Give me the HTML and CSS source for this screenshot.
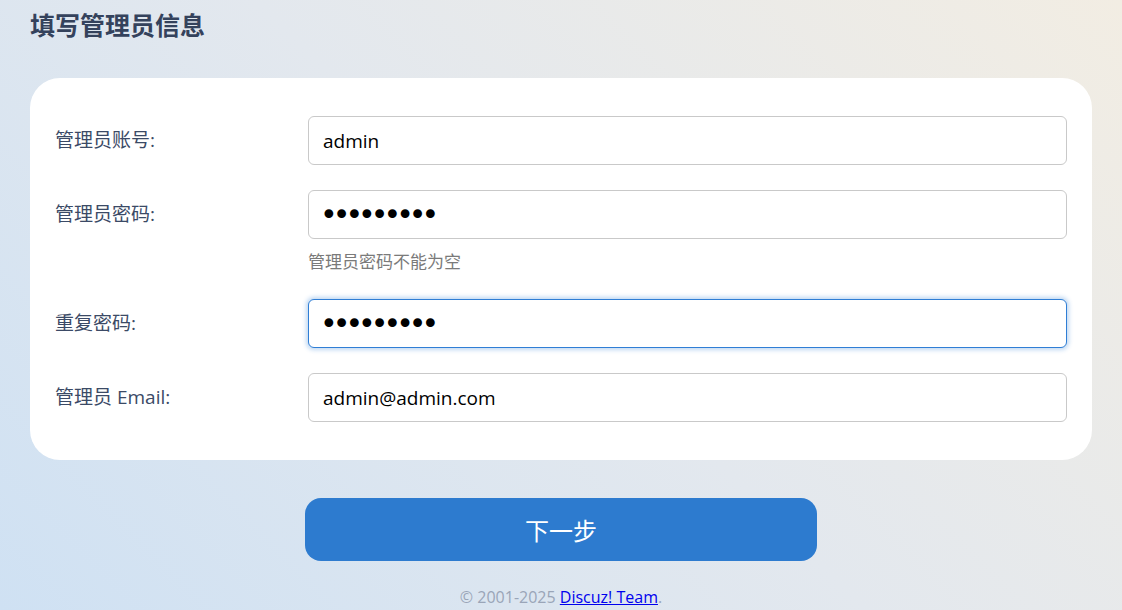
FILE: index.html
```html
<!DOCTYPE html>
<html lang="zh-CN">
<head>
    <meta charset="UTF-8">
    <meta name="viewport" content="width=device-width, initial-scale=1.0">
    <title>填写管理员信息</title>
    <link rel="stylesheet" href="styles.css">
</head>
<body>
    <div class="page">
        <h2 class="title">填写管理员信息</h2>
        <form class="card" onsubmit="return false;">
            <div class="form-row">
                <label for="username">管理员账号:</label>
                <div class="field">
                    <input type="text" id="username" value="admin">
                </div>
            </div>
            <div class="form-row">
                <label for="password">管理员密码:</label>
                <div class="field">
                    <input type="password" id="password" value="123456789">
                    <div class="hint">管理员密码不能为空</div>
                </div>
            </div>
            <div class="form-row">
                <label for="password2">重复密码:</label>
                <div class="field">
                    <input type="password" id="password2" class="focused" value="123456789">
                </div>
            </div>
            <div class="form-row">
                <label for="email">管理员 Email:</label>
                <div class="field">
                    <input type="text" id="email" value="admin@admin.com">
                </div>
            </div>
        </form>
        <div class="actions">
            <button type="button" class="btn-next">下一步</button>
        </div>
        <div class="footer">&copy; 2001-2025 <a href="#">Discuz! Team</a>.</div>
    </div>
</body>
</html>
```

FILE: styles.css
```css
html, body {
    margin: 0;
    height: 100%;
}
body {
    font-family: "Open Sans", "Noto Sans CJK SC", sans-serif;
    background: linear-gradient(45deg, #cfe1f3 0%, #e3e8ee 50%, #f2ede3 100%);
    color: #3b4a66;
    overflow: hidden;
}
.page {
    padding: 8px 30px 0;
}
.title {
    margin: 0 0 36px;
    font-size: 25px;
    line-height: 34px;
    font-weight: 700;
    color: #34425c;
}
.card {
    background-color: #fff;
    border-radius: 30px;
    padding: 38px 25px;
    display: flex;
    flex-direction: column;
    gap: 25px;
}
.form-row {
    display: grid;
    grid-template-columns: 253px 1fr;
    align-items: start;
}
.form-row label {
    font-size: 19px;
    line-height: 49px;
    color: #3b4a66;
}
.field input {
    display: block;
    width: 100%;
    height: 49px;
    box-sizing: border-box;
    padding: 0 14px;
    border: 1px solid #c9c9c9;
    border-radius: 6px;
    font-family: "Open Sans", "Noto Sans CJK SC", sans-serif;
    font-size: 19px;
    color: #000;
    outline: none;
}
.field input[type="password"] {
    font-family: "DejaVu Sans", sans-serif;
    font-size: 30px;
    letter-spacing: -5px;
    padding-left: 11px;
}
.field input.focused {
    border-color: #2f7ed5;
    box-shadow: 0 0 4px 2px rgba(47, 126, 213, 0.3);
}
.hint {
    margin-top: 11px;
    font-size: 17px;
    line-height: 24px;
    color: #7a7a7a;
}
.actions {
    display: flex;
    justify-content: center;
    margin-top: 38px;
}
.btn-next {
    width: 512px;
    height: 63px;
    border: none;
    border-radius: 16px;
    background-color: #2d7bcf;
    color: #fff;
    font-family: "Noto Sans CJK SC", sans-serif;
    font-size: 24px;
    cursor: pointer;
}
.btn-next:hover {
    background-color: #2468b3;
}
.footer {
    margin-top: 24px;
    text-align: center;
    font-size: 16px;
    line-height: 24px;
    color: #9aa5b8;
}
.footer a {
    color: #0000ee;
}
```
